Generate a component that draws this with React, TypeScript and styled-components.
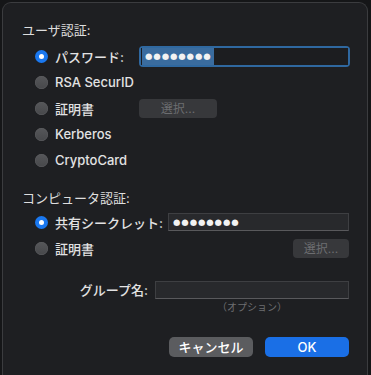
import * as React from 'react';
import styled, { createGlobalStyle } from 'styled-components';

const GlobalStyle = createGlobalStyle`
  html, body {
    margin: 0;
    background: #151618;
    overflow: hidden;
  }
  body {
    font-family: Inter, "Noto Sans CJK JP", sans-serif;
    font-size: 13px;
    color: #dcdcdd;
  }
`;

const PasswordDots: React.FC<{ selected?: boolean }> = ({ selected }) => (
  <Dots $selected={selected}>●●●●●●●●</Dots>
);

const Radio: React.FC<{ checked?: boolean; label: string }> = ({ checked, label }) => (
  <RadioLabel>
    <RadioDot $checked={checked} />
    <span>{label}</span>
  </RadioLabel>
);

export default function App() {
  return (
    <>
      <GlobalStyle />
      <Window>
        <SectionTitle>ユーザ認証:</SectionTitle>
        <Options $gap={5}>
          <Row $labelWidth={104}>
            <Radio checked label="パスワード:" />
            <FocusRing>
              <Field>
                <PasswordDots selected />
              </Field>
            </FocusRing>
          </Row>
          <Row $labelWidth={104}>
            <Radio label="RSA SecurID" />
          </Row>
          <Row $labelWidth={104}>
            <Radio label="証明書" />
            <ChooseButton $width={78}>選択...</ChooseButton>
          </Row>
          <Row $labelWidth={104}>
            <Radio label="Kerberos" />
          </Row>
          <Row $labelWidth={104}>
            <Radio label="CryptoCard" />
          </Row>
        </Options>

        <SectionTitle $gap={17}>コンピュータ認証:</SectionTitle>
        <Options $gap={3}>
          <Row $labelWidth={133}>
            <Radio checked label="共有シークレット:" />
            <Field $plain>
              <PasswordDots />
            </Field>
          </Row>
          <Row $labelWidth={133}>
            <Radio label="証明書" />
            <RightCell>
              <ChooseButton $width={56}>選択...</ChooseButton>
            </RightCell>
          </Row>
        </Options>

        <GroupRow>
          <GroupLabel>グループ名:</GroupLabel>
          <Field $plain />
        </GroupRow>
        <Hint>（オプション）</Hint>

        <Footer>
          <DialogButton>キャンセル</DialogButton>
          <DialogButton $primary>OK</DialogButton>
        </Footer>
      </Window>
    </>
  );
}

const Window = styled.div`
  margin: 2px 3px 0 2px;
  height: 380px;
  box-sizing: border-box;
  padding: 19px 18px 0 19px;
  background: #1e1f22;
  border: 1px solid #3b3c3f;
  border-bottom: none;
  border-radius: 9px 9px 0 0;
  display: flex;
  flex-direction: column;
`;

const SectionTitle = styled.div<{ $gap?: number }>`
  margin-top: ${(p) => p.$gap ?? 0}px;
  height: 16px;
  line-height: 16px;
  color: #dedede;
`;

const Options = styled.div<{ $gap: number }>`
  display: flex;
  flex-direction: column;
  padding-left: 13px;
  margin-top: ${(p) => p.$gap}px;
`;

const Row = styled.div<{ $labelWidth: number }>`
  display: grid;
  grid-template-columns: ${(p) => p.$labelWidth}px 1fr;
  align-items: center;
  height: 26px;
`;

const RadioLabel = styled.label`
  display: flex;
  align-items: center;
  gap: 7px;
  white-space: nowrap;
  font-weight: 500;
  color: #e2e2e3;
`;

const RadioDot = styled.span<{ $checked?: boolean }>`
  width: 13px;
  height: 13px;
  flex: none;
  border-radius: 50%;
  box-sizing: border-box;
  position: relative;
  background: ${(p) => (p.$checked ? '#1a78f0' : 'linear-gradient(#56575a, #47484b)')};
  box-shadow: ${(p) => (p.$checked ? 'none' : 'inset 0 0 0 0.5px #5e5f62')};

  &::after {
    content: '';
    display: ${(p) => (p.$checked ? 'block' : 'none')};
    position: absolute;
    left: 4px;
    top: 4px;
    width: 5px;
    height: 5px;
    border-radius: 50%;
    background: #ffffff;
  }
`;

const FocusRing = styled.div`
  padding: 2px;
  border-radius: 4px;
  background: #2f68a0;
  margin-right: -1px;
`;

const Field = styled.div<{ $plain?: boolean }>`
  height: ${(p) => (p.$plain ? 18 : 17)}px;
  box-sizing: border-box;
  background: ${(p) => (p.$plain ? '#28292c' : '#1c1d20')};
  border: ${(p) => (p.$plain ? '1px solid #3e3f42' : 'none')};
  border-bottom-color: #59595c;
  display: flex;
  align-items: center;
  padding-left: 1px;
`;

const Dots = styled.span<{ $selected?: boolean }>`
  font-family: "DejaVu Sans", sans-serif;
  font-size: 8.5px;
  letter-spacing: 0.9px;
  line-height: 17px;
  padding: 0 2px 0 3px;
  color: #f2f2f2;
  background: ${(p) => (p.$selected ? '#3a6c9f' : 'transparent')};
`;

const ChooseButton = styled.div<{ $width: number }>`
  width: ${(p) => p.$width}px;
  height: 19px;
  line-height: 19px;
  text-align: center;
  border-radius: 4px;
  background: #37383b;
  color: #6c6d70;
  font-size: 12px;
`;

const RightCell = styled.div`
  display: flex;
  justify-content: flex-end;
`;

const GroupRow = styled.div`
  display: grid;
  grid-template-columns: 126px 1fr;
  column-gap: 7px;
  align-items: center;
  height: 18px;
  margin-top: 19px;
`;

const GroupLabel = styled.div`
  text-align: right;
  font-weight: 500;
  color: #e2e2e3;
`;

const Hint = styled.div`
  margin-left: 133px;
  text-align: center;
  font-size: 10px;
  line-height: 14px;
  margin-top: 2px;
  color: #6d6e71;
`;

const Footer = styled.div`
  display: flex;
  justify-content: flex-end;
  gap: 12px;
  margin-top: 23px;
`;

const DialogButton = styled.div<{ $primary?: boolean }>`
  width: 84px;
  height: 20px;
  line-height: 20px;
  text-align: center;
  border-radius: 5px;
  font-weight: 500;
  color: #ffffff;
  background: ${(p) => (p.$primary ? '#1a6fe6' : '#5b5c5f')};
`;
